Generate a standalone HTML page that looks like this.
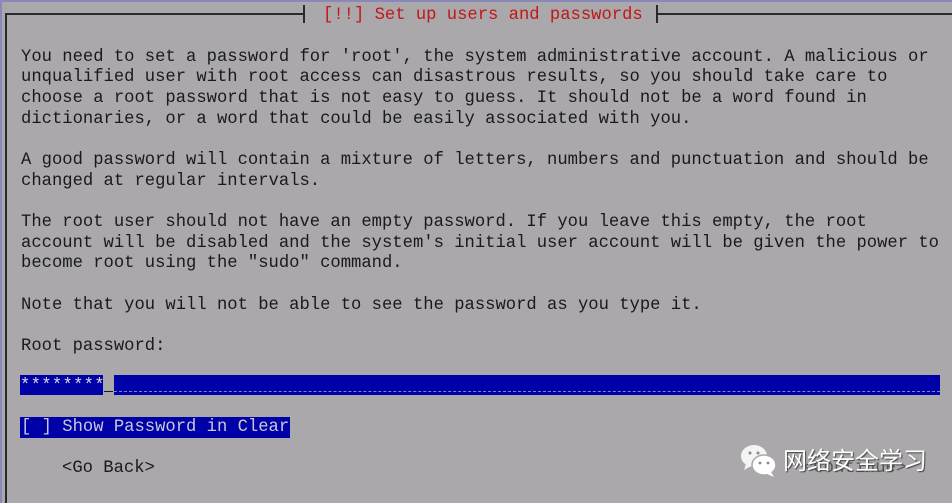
<!DOCTYPE html>
<html><head><meta charset="utf-8"><style>
html,body{margin:0;padding:0}
body{width:952px;height:503px;background:#aaa8ab;position:relative;overflow:hidden;font-family:"Liberation Mono",monospace;font-size:17.2px;color:#1a1a1a}
.row{position:absolute;left:21px;height:20.67px;line-height:20.67px;white-space:pre}
.frame-l{position:absolute;left:5px;top:13px;width:2px;height:490px;background:#2a2a2a}
.edge{position:absolute;left:0;top:0;width:2px;height:503px;background:#8a88b8}
.edgeT{position:absolute;left:0;top:0;width:952px;height:2px;background:#8a88b8}
.hl{position:absolute;height:2px;background:#2a2a2a;top:13px}
.tick{position:absolute;width:2px;height:18px;background:#2a2a2a;top:5px}
</style></head><body>
<div class="edge"></div><div class="edgeT"></div>
<div class="frame-l"></div>
<div class="hl" style="left:5px;width:298px"></div>
<div class="tick" style="left:303px"></div>
<div class="row" style="left:323px;top:6px;color:#c01818">[!!] Set up users and passwords</div>
<div class="tick" style="left:656px"></div>
<div class="hl" style="left:656px;width:296px"></div>
<div class="row" style="top:47.5px">You need to set a password for 'root', the system administrative account. A malicious or
unqualified user with root access can disastrous results, so you should take care to
choose a root password that is not easy to guess. It should not be a word found in
dictionaries, or a word that could be easily associated with you.

A good password will contain a mixture of letters, numbers and punctuation and should be
changed at regular intervals.

The root user should not have an empty password. If you leave this empty, the root
account will be disabled and the system's initial user account will be given the power to
become root using the "sudo" command.

Note that you will not be able to see the password as you type it.

Root password:</div>
<div style="position:absolute;left:20px;top:375px;width:920px;height:20px;background:#0000a8"></div>
<div style="position:absolute;left:114px;top:391px;width:826px;height:0;border-top:1px dashed #8080d8"></div>
<div style="position:absolute;left:103px;top:375px;width:11px;height:20px;background:#aaa8ab"></div>
<div style="position:absolute;left:104px;top:391px;width:9px;height:1px;background:#1a1a1a"></div>
<div class="row" style="left:20px;top:377px;color:#d8d8e8;letter-spacing:0.3px">********</div>
<div style="position:absolute;left:20px;top:417px;width:270px;height:21px;background:#0000a8"></div>
<div class="row" style="left:21px;top:418px;color:#c8c8d8">[ ] Show Password in Clear</div>
<div class="row" style="left:62px;top:459px">&lt;Go Back&gt;</div>
<div class="row" style="left:803px;top:459px;color:#555">&lt;Continue&gt;</div>
<svg style="position:absolute;left:740px;top:443px" width="38" height="36" viewBox="0 0 38 36">
<ellipse cx="14" cy="13" rx="13" ry="11" fill="#f4f4f4"/>
<path d="M6 21 l-2 6 l7 -4z" fill="#f4f4f4"/>
<ellipse cx="24" cy="22" rx="12" ry="10" fill="#fff" stroke="#aaa8ab" stroke-width="1.5"/>
<path d="M31 29 l3 5 l-7 -3z" fill="#fff"/>
<circle cx="10" cy="10" r="1.5" fill="#888"/><circle cx="18" cy="10" r="1.5" fill="#888"/>
<circle cx="20" cy="20" r="1.4" fill="#888"/><circle cx="28" cy="20" r="1.4" fill="#888"/>
</svg>
<div style="position:absolute;left:783px;top:447px;font-family:'Liberation Sans','Noto Sans CJK SC',sans-serif;font-size:24px;color:#fff;text-shadow:1px 1px 1px #444;line-height:30px">网络安全学习</div>
</body></html>
